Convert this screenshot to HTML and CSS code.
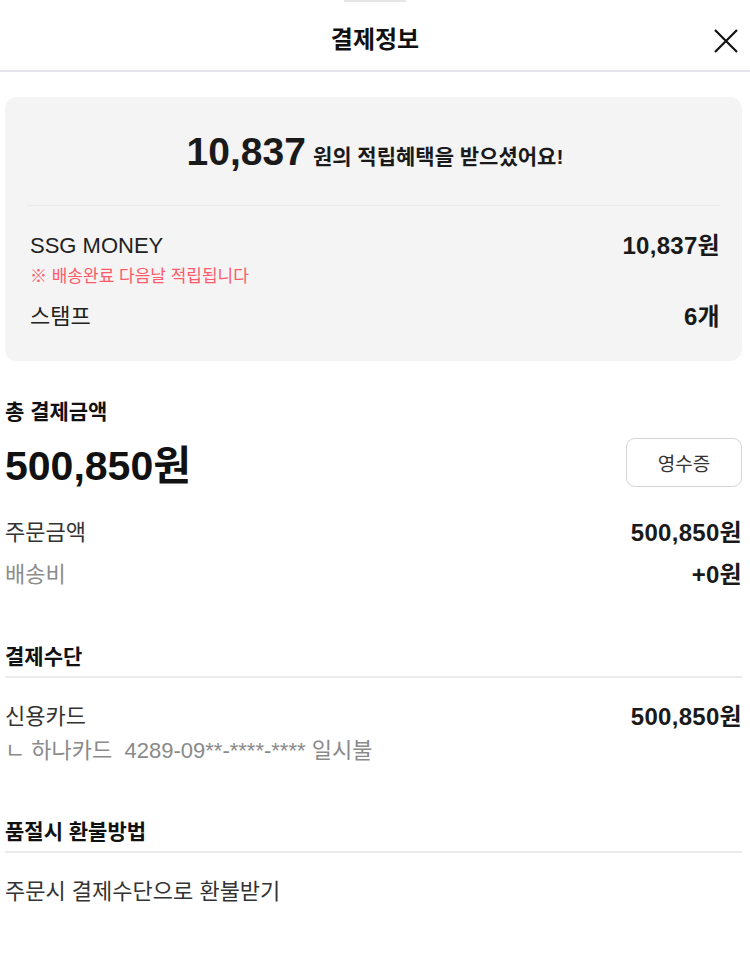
FILE: index.html
```html
<!DOCTYPE html>
<html lang="ko">
<head>
<meta charset="utf-8">
<title>결제정보</title>
<link rel="stylesheet" href="styles.css">
</head>
<body>
<div class="handle"></div>
<header class="header">
  <h1 class="header-title">결제정보</h1>
  <button class="close" aria-label="닫기">
    <svg width="26" height="26" viewBox="0 0 26 26"><path d="M2 2L24 24M24 2L2 24" stroke="#111" stroke-width="2.2" fill="none"/></svg>
  </button>
</header>
<main class="content">
  <section class="card">
    <div class="benefit"><span class="benefit-num">10,837</span><span class="benefit-text">원의 적립혜택을 받으셨어요!</span></div>
    <div class="card-divider"></div>
    <div class="row card-row">
      <span class="label">SSG MONEY</span>
      <span class="value">10,837원</span>
    </div>
    <div class="notice">※ 배송완료 다음날 적립됩니다</div>
    <div class="row card-row stamp">
      <span class="label">스탬프</span>
      <span class="value">6개</span>
    </div>
  </section>

  <section class="total">
    <h2 class="section-title">총 결제금액</h2>
    <div class="total-row">
      <span class="total-amount">500,850원</span>
      <button class="receipt">영수증</button>
    </div>
    <div class="row line first">
      <span class="label">주문금액</span>
      <span class="value">500,850원</span>
    </div>
    <div class="row line">
      <span class="label muted">배송비</span>
      <span class="value">+0원</span>
    </div>
  </section>

  <section class="block">
    <h2 class="section-title ruled">결제수단</h2>
    <div class="row line first">
      <span class="label">신용카드</span>
      <span class="value">500,850원</span>
    </div>
    <div class="sub">ㄴ 하나카드&nbsp; 4289-09**-****-**** 일시불</div>
  </section>

  <section class="block">
    <h2 class="section-title ruled">품절시 환불방법</h2>
    <div class="row line first">
      <span class="label">주문시 결제수단으로 환불받기</span>
    </div>
  </section>
</main>
</body>
</html>
```
FILE: styles.css
```css
* { box-sizing: border-box; }
html, body { margin: 0; padding: 0; background: #fff; }
body {
  font-family: "Liberation Sans", "Noto Sans CJK KR", sans-serif;
  color: #222;
  width: 750px;
  height: 955px;
  overflow: hidden;
}
.handle {
  position: absolute;
  left: 344px;
  top: 0;
  width: 62px;
  height: 2px;
  background: #e6e6e6;
}
.header {
  position: relative;
  height: 72px;
  border-bottom: 2px solid #e4e6eb;
  display: flex;
  align-items: center;
  justify-content: center;
}
.header-title {
  margin: 10px 0 0;
  font-size: 24px;
  font-weight: 700;
  line-height: 30px;
  color: #111;
}
.close {
  position: absolute;
  right: 11px;
  top: 28px;
  border: 0;
  padding: 0;
  background: none;
  width: 26px;
  height: 26px;
}
.close svg { display: block; }
.content {
  padding: 25px 8px 0 5px;
}
.card {
  background: #f4f4f4;
  border-radius: 12px;
  padding: 0 22px 30px 25px;
}
.benefit {
  height: 108px;
  display: flex;
  align-items: center;
  justify-content: center;
  gap: 7px;
  padding-top: 2px;
}
.benefit-num {
  font-size: 39px;
  font-weight: 700;
  color: #1a1a1a;
}
.benefit-text {
  font-size: 21px;
  font-weight: 700;
  color: #1a1a1a;
  padding-top: 6px;
}
.card-divider {
  height: 1px;
  background: #ebebeb;
  margin-left: -3px;
}
.row {
  display: flex;
  justify-content: space-between;
  align-items: center;
  height: 28px;
}
.label {
  font-size: 22px;
  line-height: 28px;
  color: #333;
}
.value {
  font-size: 24px;
  line-height: 28px;
  font-weight: 700;
  color: #1a1a1a;
  letter-spacing: 0.3px;
}
.card-row { margin-top: 26px; }
.card-row .label { color: #222; }
.notice {
  margin-top: 6px;
  font-size: 17px;
  line-height: 22px;
  color: #ff5a6a;
}
.stamp { margin-top: 15px; }
.total { margin-top: 38px; }
.section-title {
  margin: 0;
  font-size: 21px;
  line-height: 26px;
  font-weight: 700;
  color: #111;
}
.total-row {
  margin-top: 13px;
  display: flex;
  justify-content: space-between;
  align-items: center;
  height: 49px;
}
.total-amount {
  font-size: 41px;
  font-weight: 700;
  line-height: 44px;
  color: #111;
  margin-top: 7px;
}
.receipt {
  width: 116px;
  height: 49px;
  border: 1px solid #d4d4d4;
  border-radius: 9px;
  background: #fff;
  font-family: "Noto Sans CJK KR", sans-serif;
  font-size: 19px;
  color: #333;
  padding: 0;
}
.line { margin-top: 14px; }
.line.first { margin-top: 32px; }
.muted { color: #8c8c8c; }
.block { margin-top: 55px; }
.block + .block { margin-top: 56px; }
.ruled {
  padding-bottom: 6px;
  border-bottom: 2px solid #ebebeb;
}
.block .line.first { margin-top: 25px; }
.sub {
  margin-top: 8px;
  font-size: 22px;
  line-height: 24px;
  color: #8a8a8a;
}
```
